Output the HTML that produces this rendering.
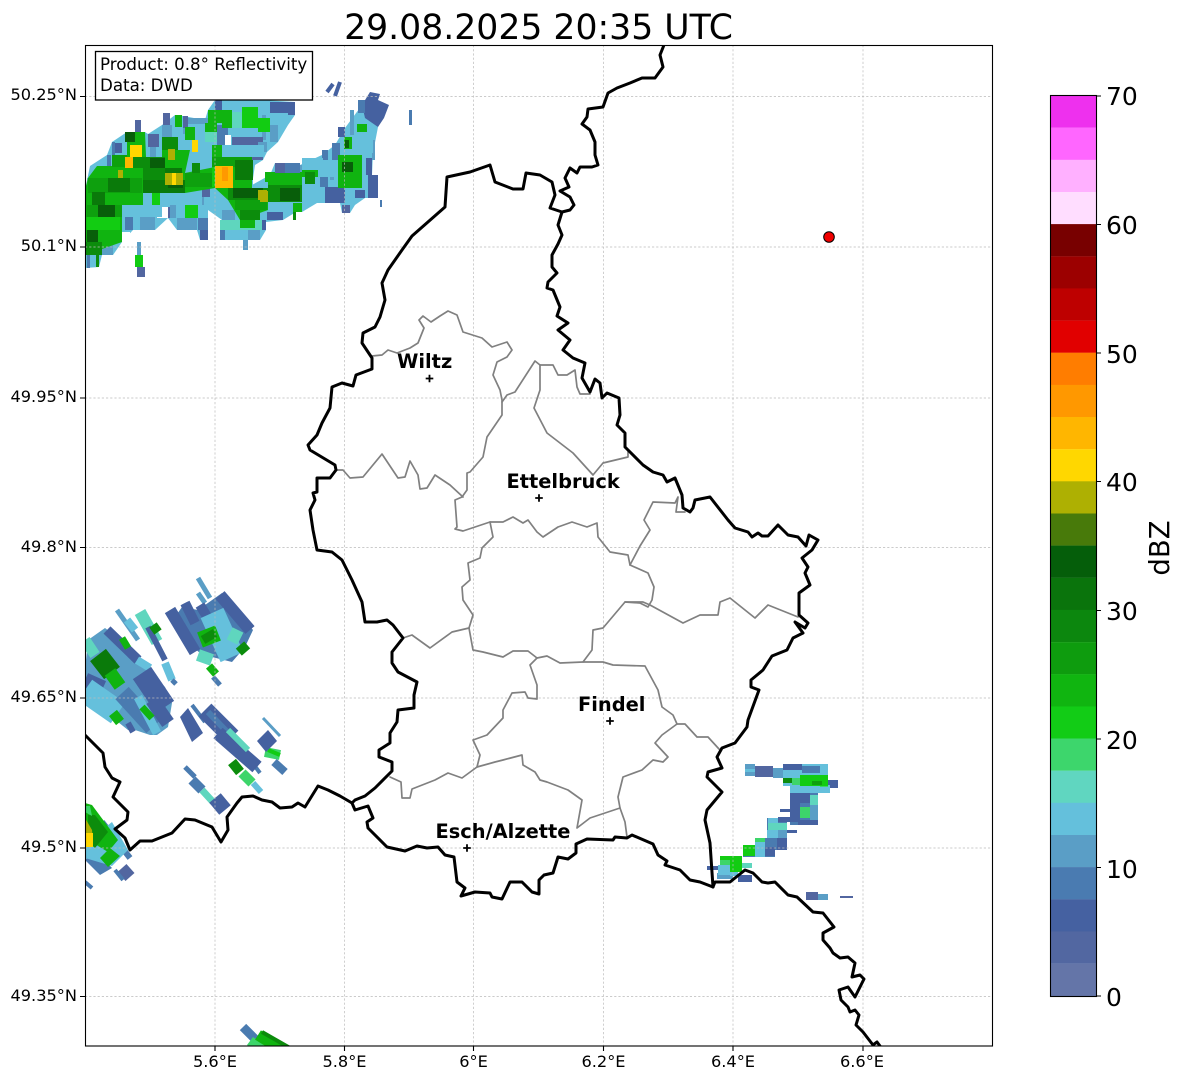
<!DOCTYPE html>
<html><head><meta charset="utf-8"><style>
html,body{margin:0;padding:0;background:#fff}
svg{display:block}
text{font-family:"DejaVu Sans",sans-serif;fill:#000}
.t{font-size:16.2px}
.cb{font-size:25px}
.city{font-size:19.4px;font-weight:bold}
.B{fill:none;stroke:#000;stroke-width:3;stroke-linejoin:round;stroke-linecap:round}
.G{fill:none;stroke:#808080;stroke-width:1.7;stroke-linejoin:round;stroke-linecap:round}
.grid{stroke:#bbb;stroke-width:.7;stroke-dasharray:2.2 2}
</style></head><body>
<svg width="1184" height="1081" viewBox="0 0 1184 1081" xmlns="http://www.w3.org/2000/svg">
<defs><clipPath id="ax"><rect x="85" y="45" width="907" height="1001"/></clipPath></defs>
<rect width="1184" height="1081" fill="#fff"/>
<g clip-path="url(#ax)">
<!-- radar top cluster -->
<path fill="#e8eaf2" d="M225 92h33v8h-33zM283 92h8v6h-8z"/>
<polygon fill="#65C0DC" points="85,190 90,166 107,155 112,142 127,132 145,132 148,134 162,125 175,115 183,116 205,120 208,110 215,100 262,100 295,102 295,115 288,125 278,142 267,152 263,160 255,165 252,185 270,175 275,163 300,165 322,155 335,145 345,128 362,105 378,127 373,153 372,175 378,198 365,198 355,205 350,213 342,213 340,203 317,203 302,212 296,212 283,220 266,222 266,230 260,240 225,240 222,220 208,210 208,240 200,240 197,230 177,230 168,218 155,230 133,230 122,242 113,255 102,255 99,267 85,268"/>
<path fill="#5A9EC6" d="M162 193h5v12h-5zM200 193h4v12h-4zM262 115h4v25h-4zM270 115h3v20h-3zM300 165h5v12h-5zM312 160h4v16h-4zM330 160h4v20h-4zM350 110h4v25h-4zM372 140h3v20h-3zM110 242h3v13h-3z"/>
<path fill="#4A7BB0" d="M190 118h4v14h-4zM200 118h3v14h-3zM228 100h4v10h-4zM240 100h5v10h-5zM258 100h4v10h-4zM222 125h6v10h-6zM280 115h4v10h-4zM296 205h5v7h-5zM335 145h4v10h-4zM320 177h8v10h-8z"/>
<path fill="#fff" d="M157 207h11v11h-11zM232 240h28v2h-28zM122 232h8v10h-8zM345 205h0v0z"/>
<path fill="#5266A0" d="M135 120h6v12h-6zM163 113h7v12h-7zM183 116h5v12h-5zM148 134h11v13h-11zM202 187h8v10h-8zM168 207h7v11h-7zM137 267h8v10h-8zM232 137h31v23h-31zM342 205h8v8h-8z"/>
<path fill="#4561A0" d="M215 100h7v10h-7zM270 102h25v13h-25zM115 143h7v10h-7zM200 230h8v10h-8zM267 212h16v8h-16zM262 220h4v10h-4zM150 205h12v12h-12z"/>
<path fill="#4A7BB0" d="M112 142h3v13h-3zM107 155h4v12h-4zM125 217h8v13h-8zM198 218h10v12h-10zM217 125h8v20h-8zM87 255h3v13h-3zM225 230h-5v10h5zM275 163h25v10h-25zM380 200h2v7h-2zM409 110h3v15h-3z"/>
<path fill="#5A9EC6" d="M183 128h5v6h-5zM162 125h10v12h-10zM177 218h20v12h-20zM243 240h5v10h-5zM137 242h4v13h-4zM222 210h13v10h-13zM270 125h8v17h-8zM258 142h9v10h-9zM102 242h11v13h-11zM140 217h15v13h-15zM188 118h20v6h-20zM248 230h12v10h-12zM150 147h6v10h-6zM122 205h5v12h-5zM170 205h6v13h-6z"/>
<path fill="#65C0DC" d="M188 124h20v8h-20zM90 166h7v12h-7zM87 178h5v12h-5zM85 190h3v15h-3zM122 205h40v12h-40zM157 193h45v12h-45zM270 113h18v12h-18zM222 100h40v10h-40zM182 162h10v11h-10zM233 180h20v8h-20zM198 153h17v14h-17zM222 145h42v12h-42zM225 230h23v10h-23z"/>
<path fill="#5FD6BE" d="M232 112h10v16h-10zM220 220h42v10h-42zM205 132h12v10h-12z"/>
<polygon fill="#10B410" points="88,178 97,166 112,166 112,155 127,155 127,132 145,132 146,157 162,157 162,137 178,137 178,150 190,150 185,173 215,167 252,157 252,188 268,188 268,172 302,172 302,203 268,203 268,210 240,220 228,200 215,188 185,193 143,193 143,205 122,205 122,242 85,255 85,190"/>
<path fill="#10B410" d="M97 166h28v12h-28zM127 132h18v13h-18zM92 193h48v12h-48zM85 230h37v12h-37zM208 110h24v13h-24zM205 123h12v9h-12zM212 145h10v12h-10zM185 127h10v13h-10zM175 115h7v12h-7zM240 220h15v8h-15zM222 123h10v5h-10z"/>
<path fill="#0EA00E" d="M112 155h15v12h-15zM88 178h54v15h-54zM87 205h35v12h-35zM212 157h40v10h-40zM185 173h27v14h-27zM235 200h32v10h-32z"/>
<path fill="#12CC12" d="M85 217h35v13h-35zM242 107h16v21h-16zM258 118h12v14h-12zM185 205h13v13h-13zM135 255h8v12h-8zM152 193h8v12h-8zM212 167h5v20h-5z"/>
<path fill="#0C8C0C" d="M85 242h17v13h-17zM162 137h16v13h-16zM133 157h32v11h-32zM192 163h8v10h-8zM96 255h3v12h-3zM143 168h22v12h-22zM228 188h40v12h-40zM240 210h20v10h-20z"/>
<path fill="#0A7A0A" d="M92 192h13v13h-13zM108 178h22v14h-22zM143 180h42v13h-42zM165 168h17v5h-17zM235 160h18v20h-18z"/>
<path fill="#085E0A" d="M98 205h17v12h-17zM87 230h11v12h-11zM150 158h15v10h-15zM168 178h15v10h-15zM233 188h30v10h-30zM125 132h10v10h-10z"/>
<path fill="#ADB003" d="M165 173h18v12h-18zM168 149h7v11h-7zM258 190h9v10h-9zM118 170h5v8h-5z"/>
<path fill="#FFD700" d="M130 145h12v12h-12zM192 140h6v12h-6zM172 173h4v12h-4z"/>
<path fill="#FFB700" d="M125 157h8v11h-8zM215 166h18v22h-18z"/>
<path fill="#FF9900" d="M222 167h6v14h-6z"/>
<rect x="225" y="135" width="6" height="10" fill="#fff"/>
<!-- right arm -->
<path fill="#5266A0" d="M275 163h10v10h-10zM342 205h8v8h-8z"/>
<path fill="#4561A0" d="M370 92L380 94 378 100 389 105 384 118 378 127 365 118 362 105zM338 127h7v10h-7zM368 137h5v11h-5zM363 158h9v17h-9zM368 175h10v23h-10zM355 190h10v8h-10zM325 187h20v16h-20zM308 195h9v8h-9zM267 212h16v8h-16z"/>
<path fill="#4A7BB0" d="M358 100h7v13h-7zM322 150h6v10h-6zM285 163h15v10h-15zM332 143h8v17h-8z"/>
<path fill="#65C0DC" d="M325 160h13v17h-13zM340 143h22v15h-22zM357 123h12v12h-12zM362 132h11v21h-11zM358 153h8v27h-8zM345 190h10v15h-10zM268 202h34v10h-34zM302 158h21v19h-21zM302 187h18v16h-18z"/>
<path fill="#10B410" d="M338 155h24v33h-24zM270 173h32v12h-32zM265 172h5v10h-5zM293 203h9v9h-9zM302 170h16v7h-16zM344 137h8v12h-8zM357 124h10v8h-10z"/>
<path fill="#0C8C0C" d="M268 185h34v17h-34zM305 172h10v12h-10zM293 212h3v8h-3z"/>
<path fill="#085E0A" d="M342 162h11v10h-11zM280 188h20v13h-20zM345 140h4v8h-4z"/>
<path fill="#ADB003" d="M260 191h8v11h-8z"/>
<!-- diag cluster bases -->
<polygon fill="#4A7BB0" points="198,610 222,593 253,630 245,647 232,662 212,657 200,653 188,643 175,617 182,607"/>
<polygon fill="#5A9EC6" points="85,670 88,640 105,628 117,637 135,657 148,670 165,687 172,703 168,727 157,735 150,735 135,730 128,730 118,722 100,713 85,697"/>
<g fill="none" stroke-linecap="butt">
<path stroke="#4561A0" stroke-width="4" d="M327 92L333 84M335 96L340 82"/>
<!-- left diag clusters -->
<path stroke="#5A9EC6" stroke-width="5" d="M198 578L210 598M117 610L138 640M198 593L205 603"/>
<path stroke="#4561A0" stroke-width="12" d="M220 595L250 630M170 610L195 652"/>
<path stroke="#4561A0" stroke-width="10" d="M200 605L212 625M107 630L138 660M185 603L195 623"/>
<path stroke="#65C0DC" stroke-width="25" d="M212 613L232 657"/>
<path stroke="#5FD6BE" stroke-width="12" d="M238 630L232 642M198 655L212 660M140 612L157 642"/>
<path stroke="#4561A0" stroke-width="6" d="M148 627L165 660M185 603L195 623"/>
<path stroke="#65C0DC" stroke-width="8" d="M165 663L172 680M127 620L135 630M137 660L150 668"/>
<path stroke="#4A7BB0" stroke-width="5" d="M172 680L176 684M213 677L220 685"/>
<path stroke="#10B410" stroke-width="16" d="M200 640L218 633"/>
<path stroke="#0C8C0C" stroke-width="9" d="M203 640L215 633M153 625L158 632"/>
<path stroke="#0C8C0C" stroke-width="11" d="M240 645L246 652"/>
<path stroke="#10B410" stroke-width="8" d="M209 666L216 674"/>
<path stroke="#4561A0" stroke-width="15" d="M85 680L103 688"/>
<path stroke="#5FD6BE" stroke-width="11" d="M85 640L95 655"/>
<path stroke="#65C0DC" stroke-width="25" d="M85 690L118 713"/>
<path stroke="#4561A0" stroke-width="22" d="M142 673L165 707"/>
<path stroke="#4A7BB0" stroke-width="18" d="M122 693L153 727"/>
<path stroke="#65C0DC" stroke-width="9" d="M138 697L157 733"/>
<path stroke="#4561A0" stroke-width="14" d="M152 700L168 723"/>
<path stroke="#4561A0" stroke-width="6" d="M128 723L133 732"/>
<path stroke="#0A7A0A" stroke-width="20" d="M98 655L112 673"/>
<path stroke="#10B410" stroke-width="13" d="M110 672L120 686"/>
<path stroke="#10B410" stroke-width="10" d="M113 713L120 722"/>
<path stroke="#10B410" stroke-width="7" d="M142 707L152 718M122 638L128 648"/>
<path stroke="#4A7BB0" stroke-width="4" d="M192 705L205 722M248 757L260 773"/>
<path stroke="#4561A0" stroke-width="18" d="M205 710L232 737"/>
<path stroke="#4A7BB0" stroke-width="6" d="M208 712L232 737"/>
<path stroke="#4561A0" stroke-width="14" d="M218 733L257 767"/>
<path stroke="#5FD6BE" stroke-width="6" d="M228 730L248 750"/>
<path stroke="#5A9EC6" stroke-width="3" d="M263 718L280 736"/>
<path stroke="#0C8C0C" stroke-width="10" d="M232 762L240 772"/>
<path stroke="#3DD56A" stroke-width="10" d="M242 773L252 783"/>
<path stroke="#65C0DC" stroke-width="6" d="M253 783L261 792"/>
<path stroke="#3DD56A" stroke-width="10" d="M265 752L280 755"/>
<path stroke="#12CC12" stroke-width="4" d="M268 750L280 755"/>
<path stroke="#4A7BB0" stroke-width="8" d="M274 762L285 772"/>
<path stroke="#4A7BB0" stroke-width="5" d="M185 767L195 777"/>
<path stroke="#4A7BB0" stroke-width="10" d="M192 780L202 790"/>
<path stroke="#5FD6BE" stroke-width="7" d="M202 790L213 802"/>
<path stroke="#4561A0" stroke-width="15" d="M215 798L225 810"/>
<!-- bottom -->
<path stroke="#4A7BB0" stroke-width="9" d="M243 1027L256 1040"/>
<path stroke="#3DD56A" stroke-width="10" d="M250 1041L262 1050"/>
<path stroke="#10B410" stroke-width="11" d="M258 1035L285 1052"/>
<path stroke="#0C8C0C" stroke-width="4" d="M262 1032L290 1048"/>
<!-- lower-left -->
<path stroke="#5266A0" stroke-width="12" d="M122 868L130 877"/>
<path stroke="#4A7BB0" stroke-width="4" d="M115 870L123 880M85 882L92 888"/>
<path stroke="#4A7BB0" stroke-width="6" d="M102 822L130 858"/>
</g>
<polygon fill="#4561A0" points="188,708 203,733 192,742 180,717"/>
<polygon fill="#4561A0" points="257,741 268,730 277,741 266,752"/>
<polygon fill="#4A7BB0" points="85,860 100,875 112,868 95,850"/>
<polygon fill="#65C0DC" points="98,833 112,822 128,850 112,866 85,858 85,845"/>
<polygon fill="#10B410" points="85,803 92,805 118,840 108,852 85,838"/>
<polygon fill="#10B410" points="110,848 120,856 108,867 100,858"/>
<polygon fill="#0C8C0C" points="88,815 95,815 108,832 95,848 88,842"/>
<polygon fill="#ADB003" points="85,818 92,830 93,840 85,833"/>
<rect x="85" y="833" width="8" height="14" fill="#FFD700"/>
<polygon fill="#3DD56A" points="85,806 90,806 92,816 85,812"/>
<!-- east cluster -->
<path fill="#65C0DC" d="M783 764h45v22h-45z"/>
<path fill="#4A7BB0" d="M790 793h28v32h-28zM767 818h20v32h-20zM743 845h32v12h-32z"/>
<path fill="#5A9EC6" d="M745 764h10v12h-10zM773 768h10v10h-10zM810 805h8v18h-8zM778 830h9v8h-9zM717 873h16v6h-16zM818 894h10v6h-10z"/>
<path fill="#5266A0" d="M755 766h18v11h-18zM806 892h12v8h-12zM840 896h13v2h-13z"/>
<path fill="#4561A0" d="M783 764h19v6h-19zM828 780h10v8h-10zM790 793h20v10h-20zM790 803h10v17h-10zM780 809h10v3h-10zM778 817h22v5h-22zM798 820h20v5h-20zM787 830h10v3h-10zM777 838h10v12h-10zM765 847h10v9h-10zM707 866h11v4h-11zM738 875h14v7h-14z"/>
<path fill="#4A7BB0" d="M802 766h18v7h-18zM765 838h12v9h-12z"/>
<path fill="#65C0DC" d="M745 769h10v3h-10zM783 770h17v8h-17zM790 785h40v8h-40zM768 818h10v9h-10zM767 830h11v8h-11zM755 842h10v15h-10zM718 865h12v10h-12zM730 870h8v6h-8z"/>
<path fill="#5FD6BE" d="M810 795h8v10h-8zM768 823h19v7h-19zM742 863h10v5h-10z"/>
<path fill="#3DD56A" d="M792 778h8v7h-8zM800 807h10v11h-10zM755 838h10v4h-10zM720 860h10v5h-10zM820 782h8v5h-8z"/>
<path fill="#12CC12" d="M800 775h28v11h-28zM743 845h12v11h-12zM720 856h22v4h-22zM730 858h12v14h-12z"/>
<path fill="#0C8C0C" d="M783 778h9v5h-9z"/>
<path fill="#0EA00E" d="M812 781h10v4h-10z"/>
</g>
<!-- grid -->
<g class="grid">
<path d="M215 45V1046M344.5 45V1046M473.5 45V1046M603.5 45V1046M733 45V1046M863 45V1046M85 96.5H992M85 247H992M85 398H992M85 547.5H992M85 698H992M85 848H992M85 996.5H992" fill="none"/>
</g>
<g clip-path="url(#ax)">
<!-- district borders -->
<path class="G" d="M372 356L382 355 388 350 397 353 410 348 418 343 424 328 419 320 423 316 431 322 440 316 448 311 457 315 463 332 482 338 492 347 507 342 512 350 507 357 497 362 493 375 500 390 502 400 502 415 487 437 483 457 470 472 467 473 467 490 462 497 455 500 457 527 455 529 463 531 490 522 503 522 513 517 523 523 528 520 537 532 543 537 558 527 572 522 587 527 597 523 598 537 610 552 628 555 630 565 648 573 654 587 652 600 648 607 640 603 625 602"/>
<path class="G" d="M337 470L343 470 350 478 363 477 382 454 398 478 405 477 410 461 418 475 420 489 427 488 435 475 450 485 463 497"/>
<path class="G" d="M502 402L507 395 515 392 535 361 540 365 540 390 534 408 547 433 573 453 593 475 603 463 628 457 628 452"/>
<path class="G" d="M540 365L553 365 558 375 567 375 575 370 577 387 580 394 590 394"/>
<path class="G" d="M490 522L493 537 482 548 480 558 468 563 470 580 462 587 463 600 473 615 469 628 473 650 483 652 503 657 513 651 528 651 537 658 547 656 560 663 583 662 603 662 613 665 645 666 658 690 662 707 673 715 677 724 685 724 697 737 708 737 719 749"/>
<path class="G" d="M677 724L662 735 655 743 668 757 663 762 653 760 642 770 623 777 618 797 620 808 625 822 627 837"/>
<path class="G" d="M620 808L590 818 577 828 582 800 568 790 547 782 540 780 535 772 523 765 522 755 503 760 495 762 477 767 480 755 473 740 487 735 503 718 503 710 512 693 525 692 528 698 537 699 537 685 530 665 537 658"/>
<path class="G" d="M477 767L462 778 448 773 435 780 412 789 410 798 402 798 401 782 390 777"/>
<path class="G" d="M403 638L412 635 430 648 452 632 469 628"/>
<path class="G" d="M583 662L592 650 593 630 603 628 625 602 643 602 650 605 683 623 700 615 718 615 720 602 730 598 755 618 768 605 798 617"/>
<path class="G" d="M630 565L640 546 650 530 644 520 653 502 675 503 678 497 676 512 685 512"/>
<!-- national borders -->
<path class="B" d="M664 45L660 55 663 67 655 78 642 78 630 83 617 88 608 93 603 107 588 109 587 117 582 124 590 130 595 142 595 155 598 165 592 167 580 167 577 173 570 168 565 178 569 187 560 191 570 197 574 205 570 210 562 212 550 208 555 195 552 182 540 175 526 173 523 189 513 189 495 182 490 165 470 172 447 177 445 207 412 236 402 250 388 270 382 283 385 300 380 317 375 327 363 333 362 343 372 358 372 369 356 375 353 386 342 383 332 387 330 408 322 423 317 435 308 445 310 450 335 465 336 470 330 478 317 478 317 492 313 493 315 500 310 510 313 530 317 550 332 552 342 560 352 580 362 602 365 622 377 622 387 620 393 625 403 638 392 652 392 663 398 672 417 682 414 695 414 708 398 710 397 722 390 733 390 743 379 750 379 757 392 762 392 771 375 788 365 796 355 800 352 803 355 810 368 806 373 818 367 822 368 828 387 847 405 851 417 846 427 848 438 847 445 855 454 857 457 882 465 888 461 896 475 892 490 893 492 897 502 899 510 882 522 882 532 892 539 894 539 880 544 875 553 873 558 857 568 859 576 853 576 844 587 839 613 840 615 837 627 838 632 835 653 844 658 855 667 861 665 865 680 870 690 880 700 882 713 887 715 882 730 882 745 870 753 873 762 882 768 883 775 882 788 895 797 897 813 912 823 913 834 927 823 933 823 940 830 948 833 953 840 958 848 957 855 963 852 977 860 975 864 979 855 997 848 987 839 990 841 1000 848 1007 850 1012 855 1010 859 1015 856 1025 863 1032 873 1045 877 1042 880 1046"/>
<path class="B" d="M562 212L558 225 562 235 558 244 552 255 552 267 557 273 548 282 547 288 553 290 560 307 557 316 568 323 558 330 570 340 563 350 573 358 585 363 582 378 590 392 595 379 600 383 602 398 607 393 619 398 620 415 617 425 625 433 625 447 643 465 653 472 663 475 667 482 675 478 682 495 683 508 690 512 693 508 695 500 710 497 728 520 735 528 748 532 752 537 758 533 762 536 768 536 778 525 788 535 798 537 806 546 809 535 818 540 812 550 802 558 808 567 805 573 810 585 799 593 799 615 808 623 805 628 795 622 803 633 793 638 787 650 772 656 763 670 751 680 751 687 759 690 748 720 747 727 735 743 722 748 717 757 722 768 708 772 707 777 722 792 707 810 705 820 710 843 713 887"/>
<path class="B" d="M85 735L103 753 105 767 112 778 120 782 113 797 128 812 127 820 115 829 125 838 130 850 140 841 152 841 172 833 185 819 195 820 212 827 221 842 228 830 227 817 237 803 242 797 253 796 262 800 272 802 280 808 292 807 298 803 305 807 318 786 328 790 340 796 352 803"/>
</g>
<!-- markers -->
<g stroke="#000" stroke-width="1.8" fill="none">
<path d="M425.7 378.5h7.6M429.5 374.7v7.6M535.2 498h7.6M539 494.2v7.6M606.2 721h7.6M610 717.2v7.6M463.2 848h7.6M467 844.2v7.6"/>
</g>
<circle cx="829" cy="237" r="5.3" fill="#f00000" stroke="#000" stroke-width="1"/>
<g class="city">
<text x="397" y="368" class="city">Wiltz</text>
<text x="506.5" y="488" class="city">Ettelbruck</text>
<text x="578" y="711" class="city">Findel</text>
<text x="435.5" y="838" class="city">Esch/Alzette</text>
</g>
<!-- legend -->
<rect x="95.5" y="51.5" width="217" height="48.5" fill="#fff" stroke="#000" stroke-width="1.3"/>
<text x="100" y="70" style="font-size:16.67px">Product: 0.8° Reflectivity</text>
<text x="100" y="91" style="font-size:16.67px">Data: DWD</text>
<!-- axes frame -->
<rect x="85.5" y="45.5" width="907" height="1000.5" fill="none" stroke="#000" stroke-width="1.1"/>
<path stroke="#000" stroke-width="1.1" d="M215 1046v5M344.5 1046v5M473.5 1046v5M603.5 1046v5M733 1046v5M863 1046v5M85 96.5h-5M85 247h-5M85 398h-5M85 547.5h-5M85 698h-5M85 848h-5M85 996.5h-5"/>
<g class="t" text-anchor="middle">
<text x="215" y="1067">5.6°E</text><text x="344.5" y="1067">5.8°E</text><text x="473.5" y="1067">6°E</text><text x="603.5" y="1067">6.2°E</text><text x="733" y="1067">6.4°E</text><text x="862" y="1067">6.6°E</text>
</g>
<g class="t" text-anchor="end">
<text x="77" y="100">50.25°N</text><text x="77" y="251">50.1°N</text><text x="77" y="402">49.95°N</text><text x="77" y="552">49.8°N</text><text x="77" y="702">49.65°N</text><text x="77" y="852">49.5°N</text><text x="77" y="1001">49.35°N</text>
</g>
<text x="538.5" y="39" text-anchor="middle" style="font-size:34.65px">29.08.2025 20:35 UTC</text>
<!-- colorbar -->
<g>
<rect x="1050.5" y="95.5" width="46" height="32.3" fill="#EE30EE"/>
<rect x="1050.5" y="127.7" width="46" height="32.3" fill="#FF66FF"/>
<rect x="1050.5" y="159.8" width="46" height="32.3" fill="#FFB0FF"/>
<rect x="1050.5" y="192" width="46" height="32.3" fill="#FFDDFF"/>
<rect x="1050.5" y="224.1" width="46" height="32.3" fill="#780000"/>
<rect x="1050.5" y="256.3" width="46" height="32.3" fill="#9C0000"/>
<rect x="1050.5" y="288.4" width="46" height="32.3" fill="#BE0000"/>
<rect x="1050.5" y="320.6" width="46" height="32.3" fill="#E10000"/>
<rect x="1050.5" y="352.7" width="46" height="32.3" fill="#FF7D00"/>
<rect x="1050.5" y="384.9" width="46" height="32.3" fill="#FF9800"/>
<rect x="1050.5" y="417" width="46" height="32.3" fill="#FFB600"/>
<rect x="1050.5" y="449.2" width="46" height="32.3" fill="#FFD700"/>
<rect x="1050.5" y="481.3" width="46" height="32.3" fill="#AEB002"/>
<rect x="1050.5" y="513.5" width="46" height="32.3" fill="#487A0A"/>
<rect x="1050.5" y="545.6" width="46" height="32.3" fill="#055E0A"/>
<rect x="1050.5" y="577.8" width="46" height="32.3" fill="#0A740C"/>
<rect x="1050.5" y="609.9" width="46" height="32.3" fill="#0C870E"/>
<rect x="1050.5" y="642.1" width="46" height="32.3" fill="#0E9C0E"/>
<rect x="1050.5" y="674.2" width="46" height="32.3" fill="#10B510"/>
<rect x="1050.5" y="706.4" width="46" height="32.3" fill="#12CC16"/>
<rect x="1050.5" y="738.5" width="46" height="32.3" fill="#3DD66C"/>
<rect x="1050.5" y="770.7" width="46" height="32.3" fill="#60D6C0"/>
<rect x="1050.5" y="802.8" width="46" height="32.3" fill="#64C0DC"/>
<rect x="1050.5" y="835" width="46" height="32.3" fill="#5A9EC6"/>
<rect x="1050.5" y="867.1" width="46" height="32.3" fill="#4A7BB1"/>
<rect x="1050.5" y="899.3" width="46" height="32.3" fill="#4561A1"/>
<rect x="1050.5" y="931.4" width="46" height="32.3" fill="#5267A1"/>
<rect x="1050.5" y="963.6" width="46" height="32.4" fill="#6475A8"/>
</g>
<rect x="1050.5" y="95.5" width="46" height="901" fill="none" stroke="#000" stroke-width="1.1"/>
<path stroke="#000" stroke-width="1.1" d="M1096 96h5M1096 224.5h5M1096 353h5M1096 481.5h5M1096 610.5h5M1096 739h5M1096 867.5h5M1096 996h5"/>
<g class="cb">
<text x="1106" y="105">70</text><text x="1106" y="234">60</text><text x="1106" y="363">50</text><text x="1106" y="491">40</text><text x="1106" y="620">30</text><text x="1106" y="749">20</text><text x="1106" y="878">10</text><text x="1106" y="1006">0</text>
</g>
<text transform="translate(1169 548) rotate(-90)" text-anchor="middle" style="font-size:27.5px">dBZ</text>
</svg>
</body></html>
